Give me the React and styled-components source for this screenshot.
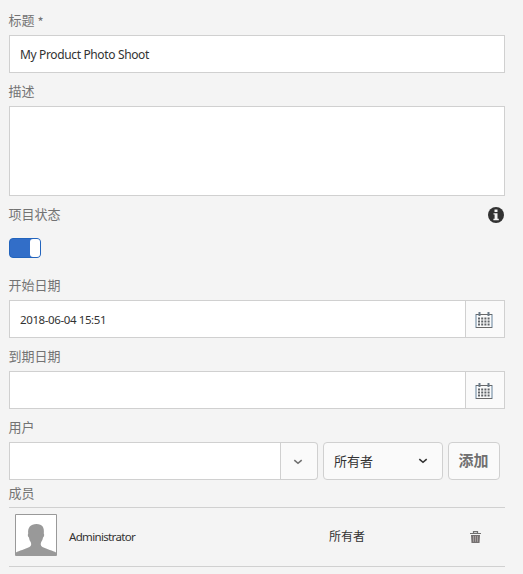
import React from 'react';
import styled, { createGlobalStyle } from 'styled-components';

const GlobalStyle = createGlobalStyle`
  *, *::before, *::after { box-sizing: border-box; }
  body {
    margin: 0;
    background: #f4f4f4;
    color: #323232;
    font: 12px/18px "Noto Sans", "Noto Sans CJK SC", sans-serif;
    overflow: hidden;
  }
  button, input, textarea { font: inherit; color: inherit; margin: 0; }
`;

const Form = styled.main`
  display: flex;
  flex-direction: column;
  width: 496px;
  margin: 7px 0 0 9px;
`;

const Field = styled.section`
  display: flex;
  flex-direction: column;
  margin-bottom: ${(p) => p.$gap ?? 5}px;
`;

const Label = styled.label`
  height: ${(p) => p.$height ?? 28}px;
  line-height: ${(p) => (p.$height ?? 28) - 2}px;
  margin-left: -0.5px;
  font-family: "Noto Sans CJK SC", sans-serif;
  font-weight: 400;
  font-size: 13px;
  color: #737373;
`;

const Required = styled.span`
  display: inline-block;
  transform: translateY(2px);
`;

const LabelRow = styled.div`
  display: flex;
  justify-content: space-between;
  align-items: center;
  padding-right: 1px;
`;

const TextInput = styled.input`
  flex: 1 1 auto;
  min-width: 0;
  height: 38px;
  flex-basis: 38px;
  padding: 0 10px;
  border: 1px solid #d0d0d0;
  border-radius: 0;
  background: #fff;
  outline: none;
  font-size: ${(p) => p.$size ?? 12}px;
  letter-spacing: ${(p) => p.$spacing ?? 0}px;
`;

const TextBox = styled.textarea`
  height: 90px;
  padding: 10px;
  border: 1px solid #d0d0d0;
  background: #fff;
  resize: none;
  outline: none;
`;

const Group = styled.div`
  display: flex;
  height: 38px;
  width: ${(p) => p.$width ?? '100%'};
`;

const AddonButton = styled.button`
  display: flex;
  align-items: center;
  justify-content: center;
  flex: 0 0 ${(p) => p.$width}px;
  padding: 0 2px 0 0;
  border: 1px solid #d0d0d0;
  border-left: 0;
  border-radius: ${(p) => (p.$rounded ? '0 4px 4px 0' : '0')};
  background: #fafafa;
  color: #707070;
`;

const Toggle = styled.button`
  display: flex;
  justify-content: flex-end;
  width: 32px;
  height: 20px;
  margin-top: 9px;
  padding: 0;
  border: 1px solid #2264bd;
  border-radius: 4px;
  background: #326ec8;
`;

const Knob = styled.span`
  width: 10px;
  height: 18px;
  border-radius: 3px;
  background: #fff;
`;

const UserRow = styled.div`
  display: flex;
  gap: 5px;
`;

const RoleSelect = styled.button`
  display: flex;
  align-items: center;
  justify-content: space-between;
  width: 120px;
  height: 38px;
  padding: 0 14px 1px 10px;
  border: 1px solid #d0d0d0;
  border-radius: 4px;
  background: #fafafa;
  font-size: 13px;
  font-family: "Noto Sans CJK SC", sans-serif;
`;

const AddButton = styled.button`
  width: 52px;
  height: 38px;
  padding: 0 1px 3px 0;
  border: 1px solid #d0d0d0;
  border-radius: 4px;
  background: #fafafa;
  color: #707070;
  font: bold 15px "Noto Sans CJK SC", sans-serif;
`;

const MemberRow = styled.div`
  display: grid;
  grid-template-columns: 54px 260px 1fr 24px;
  align-items: center;
  height: 60px;
  padding: 0 11px 2px 6px;
  border: solid #d0d0d0;
  border-width: 1px 0;
`;

const MemberName = styled.span`
  padding-top: 2px;
  font-size: 11.5px;
  letter-spacing: -0.66px;
`;

const MemberRole = styled.span`
  padding-top: 1px;
`;

const Icon = styled.svg`
  display: block;
  flex: none;
  margin-top: ${(p) => p.$top ?? 0}px;
`;

const Chevron = () => (
  <Icon width="10" height="6" viewBox="0 0 10 6" $top={1}>
    <path d="M1.3 1.2 5 4.3 8.7 1.2" fill="none" stroke="currentColor" strokeWidth="1.6" />
  </Icon>
);

const CalendarIcon = () => (
  <Icon width="18" height="17" viewBox="0 0 18 17" $top={2}>
    <path d="M1 2v14M17 2v14" stroke="#7e97ac" strokeWidth="1.2" />
    <path d="M1 2.5h16M1 15.5h16" stroke="#686868" />
    <path d="M4.5 0v4M13.5 0v4" stroke="#687886" strokeWidth="2" />
    <path d="M3 6.500h12M3 9.500h12M3 12.500h12" stroke="#606468" strokeWidth="1.8" strokeDasharray="2 1.200" />
  </Icon>
);

const InfoIcon = () => (
  <Icon width="16" height="16" viewBox="0 0 16 16">
    <circle cx="8" cy="8" r="8" fill="#323232" />
    <path d="M6.500 2.500h3v2.600h-3zM5.500 6.200h4v5.600h1.300v1.400H5.400v-1.400h1.200V7.600H5.500z" fill="#f4f4f4" />
  </Icon>
);

const Avatar = () => (
  <Icon width="42" height="42" viewBox="0 0 42 42" $top={-2}>
    <path d="M.5.5h41v41H.5z" fill="#fff" stroke="#999" />
    <path d="M1 41v-2.500c3-1.800 9-3.200 13.500-5.500 2-.9 2-3.200 1.200-5-1-1-1.500-2.600-1.700-4.400-1.200-.6-1.500-3-.8-4-.7-6 2.300-9.600 8.300-9.600s8 3.600 7.300 9.600c.7 1 .4 3.400-.8 4-.2 1.800-.9 3.400-1.800 4.400-.8 1.800-.7 4.100 1.200 5C32 35.300 38 36.700 41 38.500V41z" fill="#999" />
  </Icon>
);

const TrashIcon = () => (
  <Icon width="11" height="12" viewBox="0 0 11 12" $top={2}>
    <path d="M3.500 2V.6h4V2M0 2.500h11" fill="none" stroke="#707070" strokeWidth="1.200" />
    <path d="M1 4h9l-.5 8h-8z" fill="#747070" />
    <path d="M3.500 5v5.800M5.500 5v5.800M7.500 5v5.800" stroke="#c8c0c0" strokeWidth=".6" />
  </Icon>
);

function DateField({ label, value }) {
  return (
    <Field>
      <Label>{label}</Label>
      <Group>
        <TextInput defaultValue={value} $size={11.5} $spacing={-0.39} />
        <AddonButton $width={39}><CalendarIcon /></AddonButton>
      </Group>
    </Field>
  );
}

export default function App() {
  return (
    <>
      <GlobalStyle />
      <Form>
        <Field>
          <Label>标题 <Required>*</Required></Label>
          <TextInput defaultValue="My Product Photo Shoot" $spacing={-0.36} />
        </Field>
        <Field>
          <Label>描述</Label>
          <TextBox />
        </Field>
        <Field $gap={14}>
          <LabelRow>
            <Label>项目状态</Label>
            <InfoIcon />
          </LabelRow>
          <Toggle><Knob /></Toggle>
        </Field>
        <DateField label="开始日期" value="2018-06-04 15:51" />
        <DateField label="到期日期" value="" />
        <Field $gap={0}>
          <Label>用户</Label>
          <UserRow>
            <Group $width="309px">
              <TextInput />
              <AddonButton $width={37} $rounded><Chevron /></AddonButton>
            </Group>
            <RoleSelect>所有者<Chevron /></RoleSelect>
            <AddButton>添加</AddButton>
          </UserRow>
        </Field>
        <Label as="div" $height={27}>成员</Label>
        <MemberRow>
          <Avatar />
          <MemberName>Administrator</MemberName>
          <MemberRole>所有者</MemberRole>
          <TrashIcon />
        </MemberRow>
      </Form>
    </>
  );
}
